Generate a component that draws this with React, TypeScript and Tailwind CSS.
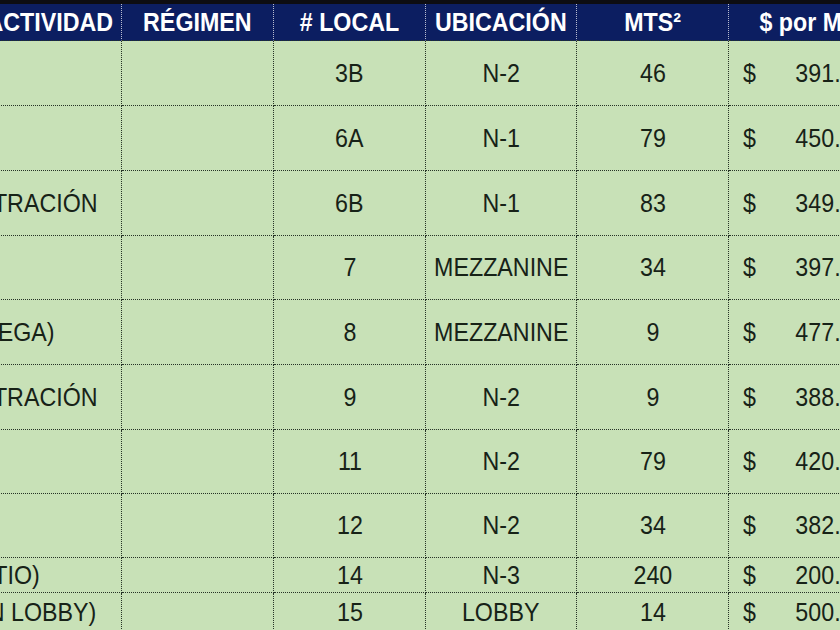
import React from 'react';

const rows = [
  { act: '', local: '3B', ubic: 'N-2', mts: '46', price: '391.30', h: 'h-[65px]' },
  { act: '', local: '6A', ubic: 'N-1', mts: '79', price: '450.00', h: 'h-[65px]' },
  { act: 'ADMINISTRACIÓN', local: '6B', ubic: 'N-1', mts: '83', price: '349.40', h: 'h-[65px]' },
  { act: '', local: '7', ubic: 'MEZZANINE', mts: '34', price: '397.10', h: 'h-[64px]' },
  { act: 'VIP (BODEGA)', local: '8', ubic: 'MEZZANINE', mts: '9', price: '477.80', h: 'h-[65px]' },
  { act: 'ADMINISTRACIÓN', local: '9', ubic: 'N-2', mts: '9', price: '388.90', h: 'h-[65px]' },
  { act: '', local: '11', ubic: 'N-2', mts: '79', price: '420.50', h: 'h-[64px]' },
  { act: '', local: '12', ubic: 'N-2', mts: '34', price: '382.60', h: 'h-[64px]' },
  { act: 'PISO (PATIO)', local: '14', ubic: 'N-3', mts: '240', price: '200.00', h: 'h-[35px]' },
  { act: 'CAFÉ (EN LOBBY)', local: '15', ubic: 'LOBBY', mts: '14', price: '500.00', h: 'h-[40px]' },
];

const headers = ['RÉGIMEN', '# LOCAL', 'UBICACIÓN', 'MTS²', '$ por M²'];

const cell = 'flex items-center border-r border-b border-dotted border-[#263326] bg-[#c8e1b7]';
const head = 'flex items-center border-r border-b border-dotted border-r-[#b8bcd0] border-b-[#263326] bg-[#0c1e61]';
const txt = 'inline-block scale-x-[0.93] whitespace-nowrap';

export default function App() {
  return (
    <div className="w-[840px] h-[630px] overflow-hidden bg-[#c8e1b7] font-['Liberation_Sans',Arial,sans-serif] text-[25px] leading-none text-[#172217]">
      <div className="h-[4px] bg-[#0d0d12]" />
      <div className="ml-[-110px] grid grid-cols-[232px_152px_152px_151px_152px_152px]">
        <div className={`${head} h-[37px] justify-end pr-[8px]`}>
          <span className={`${txt} origin-right font-bold text-white`}>ACTIVIDAD</span>
        </div>
        {headers.map((h) => (
          <div key={h} className={`${head} h-[37px] justify-center`}>
            <span className={`${txt} font-bold text-white`}>{h}</span>
          </div>
        ))}

        {rows.map((r, i) => (
          <React.Fragment key={i}>
            <div className={`${cell} ${r.h} pl-[6px]`}>
              <span className={`${txt} origin-left`}>{r.act}</span>
            </div>
            <div className={`${cell} ${r.h}`} />
            <div className={`${cell} ${r.h} justify-center`}>
              <span className={txt}>{r.local}</span>
            </div>
            <div className={`${cell} ${r.h} justify-center`}>
              <span className={txt}>{r.ubic}</span>
            </div>
            <div className={`${cell} ${r.h} justify-center`}>
              <span className={txt}>{r.mts}</span>
            </div>
            <div className={`${cell} ${r.h} justify-between pl-[14px] pr-[14px]`}>
              <span className={`${txt} origin-left`}>$</span>
              <span className={`${txt} origin-right`}>{r.price}</span>
            </div>
          </React.Fragment>
        ))}
      </div>
    </div>
  );
}
